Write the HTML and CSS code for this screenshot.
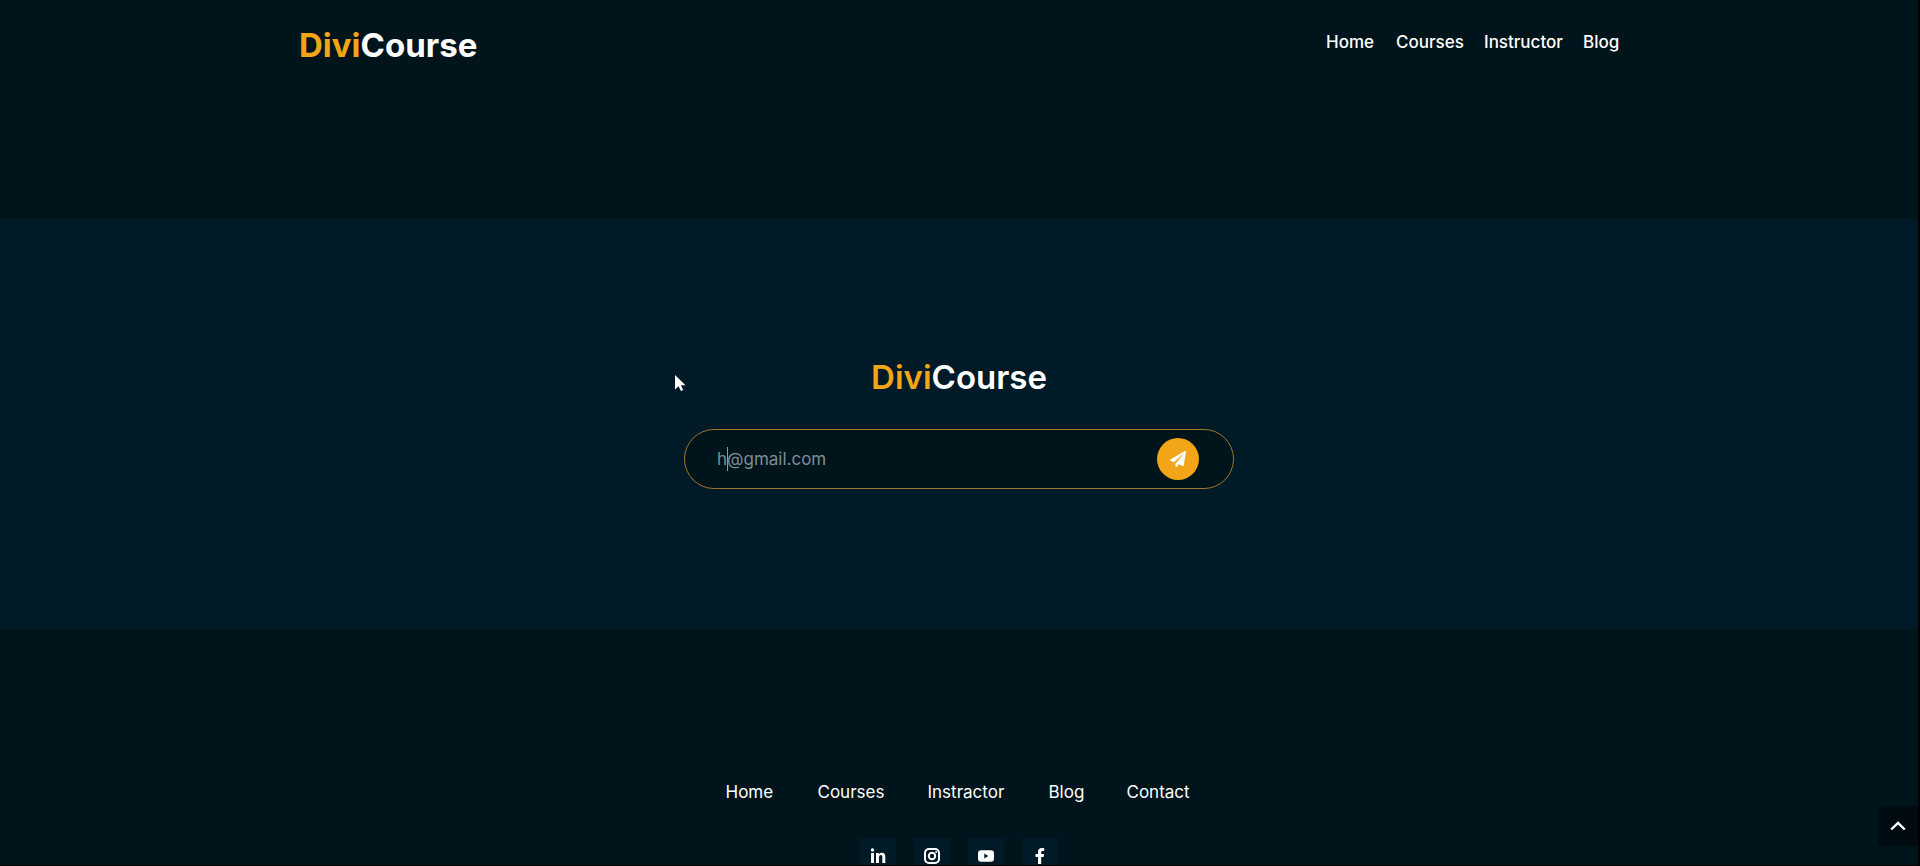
FILE: index.html
```html
<!DOCTYPE html>
<html lang="en">
<head>
<meta charset="utf-8">
<meta name="viewport" content="width=device-width, initial-scale=1">
<title>DiviCourse</title>
<link rel="stylesheet" href="styles.css">
</head>
<body>
<div class="page">
  <header class="site-header">
    <a class="logo" href="#"><span class="accent">Divi</span>Course</a>
    <nav class="main-nav" aria-label="Main">
      <a href="#">Home</a>
      <a href="#">Courses</a>
      <a href="#">Instructor</a>
      <a href="#">Blog</a>
    </nav>
  </header>

  <main class="signup">
    <h1 class="signup-title"><span class="accent">Divi</span>Course</h1>
    <form class="signup-form">
      <input class="email" type="text" aria-label="Email" value="h@gmail.com">
      <span class="caret"></span>
      <button class="send" type="button" aria-label="Subscribe">
        <svg viewBox="0 0 512 512" width="16" height="16"><path fill="#fff" d="M476 3.200L12.500 270.600c-18.100 10.400-15.800 35.600 2.200 43.200L121 358.400l287.300-253.200c5.500-4.900 13.300 2.600 8.600 8.300L176 407v80.500c0 23.600 28.500 32.900 42.500 15.800L282 426l124.600 52.200c14.200 6 30.400-2.900 33-18.200l72-432C515 7.800 493.300-6.800 476 3.200z"/></svg>
      </button>
    </form>
  </main>

  <footer class="site-footer">
    <nav class="footer-nav" aria-label="Footer">
      <a href="#">Home</a>
      <a href="#">Courses</a>
      <a href="#">Instractor</a>
      <a href="#">Blog</a>
      <a href="#">Contact</a>
    </nav>
    <div class="social">
      <a href="#" aria-label="LinkedIn"><svg viewBox="0 0 16 16" width="16" height="16" fill="#fff"><circle cx="2.500" cy="2" r="1.700"/><path d="M1 5h3v10H1zM6 5h2.800v1.400C9.400 5.300 10.500 4.700 12 4.700c2.600 0 3.300 1.700 3.300 4.100V15h-3V9.500c0-1.300-.2-2.400-1.500-2.400S9 8.200 9 9.500V15H6z"/></svg></a>
      <a href="#" aria-label="Instagram"><svg viewBox="0 0 16 16" width="16" height="16" fill="none" stroke="#fff" stroke-width="2"><rect x="1" y="1" width="14" height="14" rx="4"/><circle cx="8" cy="8" r="3.200"/><circle cx="12.100" cy="3.900" r="1" fill="#fff" stroke="none"/></svg></a>
      <a href="#" aria-label="YouTube"><svg viewBox="0 0 16 16" width="16" height="16"><path fill="#fff" fill-rule="evenodd" d="M3 2.300h10c2 0 3 1.200 3 3v5.400c0 1.800-1 3-3 3H3c-2 0-3-1.200-3-3V5.300c0-1.800 1-3 3-3zM6.300 5.600v4.800L10.300 8z"/></svg></a>
      <a href="#" aria-label="Facebook"><svg viewBox="0 0 16 16" width="16" height="16"><path fill="#fff" d="M6 16V9H3.500V6H6V4c0-2.700 1.500-4 3.900-4 1.100 0 1.900.1 2.300.2v2.700h-1.500C9.500 2.900 9.200 3.500 9.200 4.400V6h2.900l-.4 3H9.200v7z"/></svg></a>
    </div>
  </footer>

  <button class="to-top" type="button" aria-label="Back to top">
    <svg viewBox="0 0 16 10" width="16" height="10"><path fill="none" stroke="#fff" stroke-width="2.400" d="M1.200 8.500L8 1.900l6.800 6.600"/></svg>
  </button>
  <svg class="pointer" viewBox="0 0 12 17" width="12" height="17"><path fill="#fff" d="M0 0v14.500l3.500-3.300L6 16l2.200-1-2.300-4.700h4.600z"/></svg>
</div>
</body>
</html>
```
FILE: styles.css
```css
* { box-sizing: border-box; }
body {
  margin: 0;
  background: #00141b;
  color: #fff;
  font-family: Inter, "Liberation Sans", sans-serif;
  font-size: 17px;
  line-height: 24px;
}
a { color: inherit; text-decoration: none; }
.page {
  position: relative;
  height: 100vh;
  overflow: hidden;
  border-right: 2px solid #000;
  border-bottom: 1px solid #000;
}
.site-header {
  display: flex;
  justify-content: space-between;
  align-items: flex-start;
  max-width: 1368px;
  min-height: 219px;
  margin: 0 auto;
  padding: 24px 24px 0;
}
.logo { font-size: 33px; font-weight: 700; line-height: 42px; }
.accent { color: #f2a516; }
.main-nav {
  display: grid;
  grid-template-columns: 70px 88px 99px 36px;
  padding-top: 6px;
  font-weight: 500;
}
.signup {
  display: flex;
  flex-direction: column;
  align-items: center;
  gap: 31px;
  padding: 137px 24px 140px;
  background: #001a27;
}
.signup-title { margin: 0; font-size: 33px; font-weight: 600; line-height: 42px; }
.signup-form {
  position: relative;
  display: flex;
  align-items: center;
  width: 100%;
  max-width: 550px;
  height: 60px;
  padding: 0 34px 0 32px;
  border: 1px solid #a0762a;
  border-radius: 30px;
  background: #00141b;
}
.email {
  flex: 1;
  min-width: 0;
  padding: 0;
  border: 0;
  outline: 0;
  background: transparent;
  color: #7d8d96;
  font: inherit;
}
.caret {
  position: absolute;
  left: 42px;
  top: 17px;
  width: 1px;
  height: 24px;
  background: #8d9aa1;
}
.send {
  display: grid;
  place-items: center;
  width: 42px;
  height: 42px;
  padding: 0;
  border: 0;
  border-radius: 50%;
  background: #f2a516;
}
.site-footer {
  display: flex;
  flex-direction: column;
  align-items: center;
  gap: 34px;
  padding-top: 151px;
}
.footer-nav {
  display: grid;
  grid-template-columns: 92px 110px 121px 78px 66px;
}
.social { display: flex; gap: 18px; }
.social a {
  display: grid;
  place-items: center;
  width: 36px;
  height: 36px;
  background: #001a27;
}
.to-top {
  position: absolute;
  right: 0;
  bottom: 19px;
  display: grid;
  place-items: center;
  width: 40px;
  height: 40px;
  padding: 0;
  border: 0;
  border-radius: 6px 0 0 6px;
  background: #000c11;
}
.pointer { position: absolute; left: 675px; top: 375px; }
```
